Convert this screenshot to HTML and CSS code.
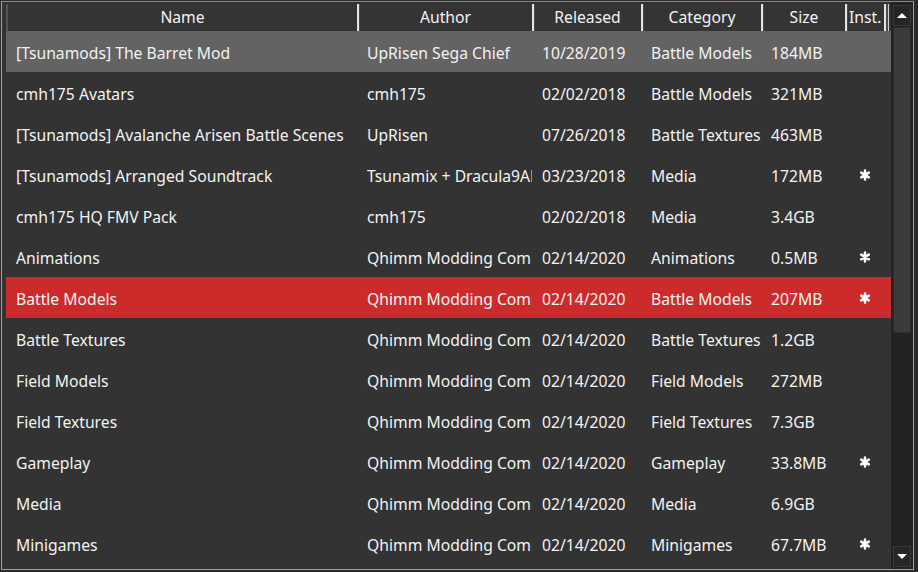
FILE: index.html
```html
<!DOCTYPE html>
<html>
<head>
<meta charset="utf-8">
<link rel="stylesheet" href="styles.css">
</head>
<body>
<div class="frame">
  <div class="main">
    <div class="header grid">
      <div class="hc first">Name</div>
      <div class="hc">Author</div>
      <div class="hc">Released</div>
      <div class="hc">Category</div>
      <div class="hc">Size</div>
      <div class="hc inst">Inst.</div>
      <div class="hc filler"></div>
    </div>
    <div class="rows">
      <div class="row grid sel">
        <div class="c">[Tsunamods] The Barret Mod</div><div class="c">UpRisen Sega Chief</div><div class="c">10/28/2019</div><div class="c">Battle Models</div><div class="c">184MB</div><div class="c ic"></div><div></div>
      </div>
      <div class="row grid">
        <div class="c">cmh175 Avatars</div><div class="c">cmh175</div><div class="c">02/02/2018</div><div class="c">Battle Models</div><div class="c">321MB</div><div class="c ic"></div><div></div>
      </div>
      <div class="row grid">
        <div class="c">[Tsunamods] Avalanche Arisen Battle Scenes</div><div class="c">UpRisen</div><div class="c">07/26/2018</div><div class="c">Battle Textures</div><div class="c">463MB</div><div class="c ic"></div><div></div>
      </div>
      <div class="row grid">
        <div class="c">[Tsunamods] Arranged Soundtrack</div><div class="c">Tsunamix + Dracula9AD</div><div class="c">03/23/2018</div><div class="c">Media</div><div class="c">172MB</div><div class="c ic"><svg class="ast" viewBox="0 0 12 12"><path d="M6 1.5V10.5M2.2 3.6L9.8 8.4M9.8 3.6L2.2 8.4"/></svg></div><div></div>
      </div>
      <div class="row grid">
        <div class="c">cmh175 HQ FMV Pack</div><div class="c">cmh175</div><div class="c">02/02/2018</div><div class="c">Media</div><div class="c">3.4GB</div><div class="c ic"></div><div></div>
      </div>
      <div class="row grid">
        <div class="c">Animations</div><div class="c">Qhimm Modding Community</div><div class="c">02/14/2020</div><div class="c">Animations</div><div class="c">0.5MB</div><div class="c ic"><svg class="ast" viewBox="0 0 12 12"><path d="M6 1.5V10.5M2.2 3.6L9.8 8.4M9.8 3.6L2.2 8.4"/></svg></div><div></div>
      </div>
      <div class="row grid red">
        <div class="c">Battle Models</div><div class="c">Qhimm Modding Community</div><div class="c">02/14/2020</div><div class="c">Battle Models</div><div class="c">207MB</div><div class="c ic"><svg class="ast" viewBox="0 0 12 12"><path d="M6 1.5V10.5M2.2 3.6L9.8 8.4M9.8 3.6L2.2 8.4"/></svg></div><div></div>
      </div>
      <div class="row grid">
        <div class="c">Battle Textures</div><div class="c">Qhimm Modding Community</div><div class="c">02/14/2020</div><div class="c">Battle Textures</div><div class="c">1.2GB</div><div class="c ic"></div><div></div>
      </div>
      <div class="row grid">
        <div class="c">Field Models</div><div class="c">Qhimm Modding Community</div><div class="c">02/14/2020</div><div class="c">Field Models</div><div class="c">272MB</div><div class="c ic"></div><div></div>
      </div>
      <div class="row grid">
        <div class="c">Field Textures</div><div class="c">Qhimm Modding Community</div><div class="c">02/14/2020</div><div class="c">Field Textures</div><div class="c">7.3GB</div><div class="c ic"></div><div></div>
      </div>
      <div class="row grid">
        <div class="c">Gameplay</div><div class="c">Qhimm Modding Community</div><div class="c">02/14/2020</div><div class="c">Gameplay</div><div class="c">33.8MB</div><div class="c ic"><svg class="ast" viewBox="0 0 12 12"><path d="M6 1.5V10.5M2.2 3.6L9.8 8.4M9.8 3.6L2.2 8.4"/></svg></div><div></div>
      </div>
      <div class="row grid">
        <div class="c">Media</div><div class="c">Qhimm Modding Community</div><div class="c">02/14/2020</div><div class="c">Media</div><div class="c">6.9GB</div><div class="c ic"></div><div></div>
      </div>
      <div class="row grid">
        <div class="c">Minigames</div><div class="c">Qhimm Modding Community</div><div class="c">02/14/2020</div><div class="c">Minigames</div><div class="c">67.7MB</div><div class="c ic"><svg class="ast" viewBox="0 0 12 12"><path d="M6 1.5V10.5M2.2 3.6L9.8 8.4M9.8 3.6L2.2 8.4"/></svg></div><div></div>
      </div>
    </div>
  </div>
  <div class="scrollbar">
    <div class="sbtn"><span class="tri up"></span></div>
    <div class="track"><div class="thumb"></div></div>
    <div class="sbtn"><span class="tri down"></span></div>
  </div>
</div>
</body>
</html>
```
FILE: styles.css
```css
html, body {
  margin: 0;
  padding: 0;
  background: #2b2b2b;
  width: 918px;
  height: 572px;
  overflow: hidden;
}
body {
  font-family: "Noto Sans", "Open Sans", sans-serif;
  font-size: 15.7px;
  color: #f2f2f2;
}
.frame {
  margin: 1px 0 0 1px;
  width: 913px;
  height: 569px;
  box-sizing: border-box;
  border: 1px solid #86a9c6;
  border-top-color: #5f95c7;
  background: #333333;
  display: flex;
}
.main {
  width: 889px;
  padding-top: 2px;
  display: flex;
  flex-direction: column;
}
.grid {
  display: grid;
  grid-template-columns: 351px 175px 109px 120px 84px 39px 1fr;
}
.header {
  margin-left: 4px;
  height: 27px;
  background: #343434;
}
.hc {
  border-left: 2px solid #e4e4e4;
  box-shadow: inset 1px 0 0 #4c4c4c;
  display: flex;
  align-items: center;
  justify-content: center;
  white-space: nowrap;
  overflow: hidden;
  line-height: 27px;
}
.hc.first {
  border-left-color: #555555;
  box-shadow: none;
}
.hc.inst {
  justify-content: flex-start;
  padding-left: 2px;
}
.hc.filler {
  border-left-width: 2px;
  box-shadow: inset 2px 0 0 #4c4c4c, inset 3px 0 0 #d0d0d0;
}
.rows {
  margin-left: 4px;
}
.row {
  height: 41px;
  align-items: center;
}
.row.sel { background: #636363; }
.row.red { background: #cc2b2b; }
.c {
  padding-left: 10px;
  padding-right: 4px;
  padding-top: 3px;
  white-space: nowrap;
  overflow: hidden;
  line-height: 38px;
}
.c.ic {
  padding: 0;
  display: flex;
  align-items: center;
  justify-content: center;
}
.ast {
  width: 12px;
  height: 12px;
  fill: none;
  stroke: #ffffff;
  stroke-width: 2.5;
  stroke-linecap: round;
}
.scrollbar {
  width: 22px;
  background: #222222;
  display: flex;
  flex-direction: column;
  padding: 3px 2px 2px 2px;
  box-sizing: border-box;
  gap: 1px;
}
.sbtn {
  height: 21px;
  box-sizing: border-box;
  border: 1px solid #383838;
  background: #262626;
  display: flex;
  align-items: center;
  justify-content: center;
}
.tri {
  width: 0;
  height: 0;
  border-left: 5px solid transparent;
  border-right: 5px solid transparent;
}
.tri.up { border-bottom: 5px solid #ffffff; }
.tri.down { border-top: 5px solid #ffffff; }
.track {
  flex: 1;
}
.thumb {
  height: 306px;
  box-sizing: border-box;
  border: 1px solid #2c2c2c;
  background: #3b3b3b;
}
```
